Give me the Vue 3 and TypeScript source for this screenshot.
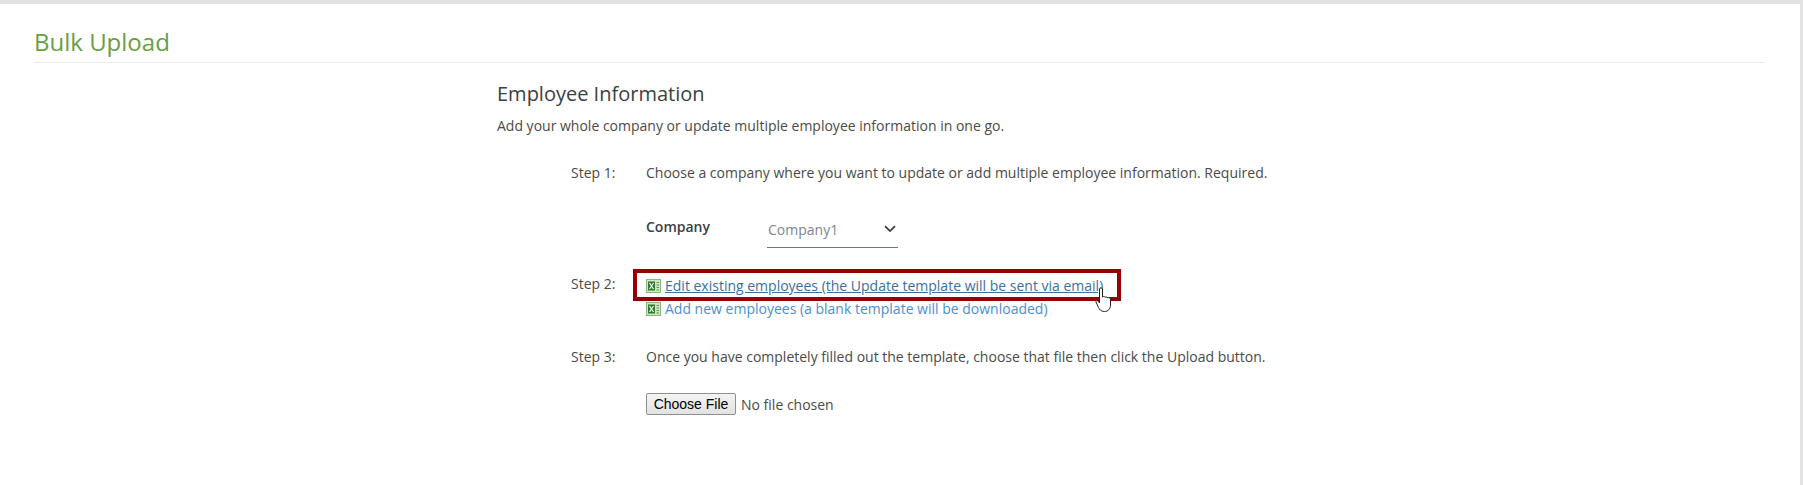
<script setup lang="ts">
const company = 'Company1';
</script>

<template>
  <div class="page">
    <main class="panel">
      <header class="head">
        <h1 class="title">Bulk Upload</h1>
      </header>

      <section class="content">
        <h2 class="section-title">Employee Information</h2>
        <p class="intro">Add your whole company or update multiple employee information in one go.</p>

        <div class="step step-one">
          <span class="step-label">Step 1:</span>
          <div class="step-body">
            <p class="line">Choose a company where you want to update or add multiple employee information. Required.</p>
            <div class="company-row">
              <span class="company-label">Company</span>
              <div class="select">
                <span>{{ company }}</span>
                <svg class="chevron" viewBox="0 0 12 8" width="12" height="8">
                  <path d="M1 1.2 L6 6 L11 1.2" fill="none" stroke="#343a40" stroke-width="1.7" />
                </svg>
              </div>
            </div>
          </div>
        </div>

        <div class="step step-two">
          <span class="step-label">Step 2:</span>
          <div class="step-body links">
            <a class="link active" href="#">
              <svg class="xls" viewBox="0 0 15 14" width="15" height="14">
                <rect x="0.5" y="0.5" width="14" height="13" fill="#d3e4c8" stroke="#8fb67e" />
                <rect x="2" y="2.5" width="7" height="9" fill="#2a7a2a" />
                <path d="M3.5 4 L7.5 10 M7.5 4 L3.5 10" stroke="#fff" stroke-width="1.2" />
                <path d="M10.5 3.5 H13 M10.5 6 H13 M10.5 8.5 H13 M10.5 11 H13" stroke="#4c9a4c" stroke-width="1.2" />
              </svg>
              <span class="link-text">Edit existing employees (the Update template will be sent via email)</span>
            </a>
            <a class="link" href="#">
              <svg class="xls" viewBox="0 0 15 14" width="15" height="14">
                <rect x="0.5" y="0.5" width="14" height="13" fill="#d3e4c8" stroke="#8fb67e" />
                <rect x="2" y="2.5" width="7" height="9" fill="#2a7a2a" />
                <path d="M3.5 4 L7.5 10 M7.5 4 L3.5 10" stroke="#fff" stroke-width="1.2" />
                <path d="M10.5 3.5 H13 M10.5 6 H13 M10.5 8.5 H13 M10.5 11 H13" stroke="#4c9a4c" stroke-width="1.2" />
              </svg>
              <span>Add new employees (a blank template will be downloaded)</span>
            </a>
            <div class="callout"></div>
            <svg class="cursor" viewBox="0 0 18 26" width="18" height="26">
              <path
                d="M4.5 2 C4.5 0.4 7.5 0.4 7.5 2 V10 C8.3 9.2 9.6 9.4 10 10.3 C11 9.6 12.3 9.9 12.7 10.8 C13.7 10.3 15.4 10.8 15.5 12.2 V18 C15.5 22 13 24.5 9.5 24.5 C6 24.5 4.5 22.5 3.5 20.5 L1 15 C0.6 13.8 2.2 13 3 14 L4.5 16 Z"
                fill="#fff"
                stroke="#222"
                stroke-width="1"
              />
            </svg>
          </div>
        </div>

        <div class="step step-three">
          <span class="step-label">Step 3:</span>
          <div class="step-body">
            <p class="line">Once you have completely filled out the template, choose that file then click the Upload button.</p>
            <div class="file-row">
              <button class="file-btn" type="button">Choose File</button>
              <span class="file-name">No file chosen</span>
            </div>
          </div>
        </div>
      </section>
    </main>
  </div>
</template>

<style>
html,
body {
  margin: 0;
  background: #fff;
}
</style>

<style scoped>
.page {
  box-sizing: border-box;
  width: 1803px;
  height: 485px;
  overflow: hidden;
  background: #e3e3e3;
  padding: 4px 3px 0 0;
  font-family: "Open Sans", sans-serif;
  font-size: 14px;
  color: #4a4a4a;
}

.panel {
  box-sizing: border-box;
  height: 100%;
  background: #fff;
  padding: 0 36px 0 34px;
}

.head {
  height: 58px;
  border-bottom: 1px solid #ebebeb;
  box-sizing: content-box;
}

.title {
  margin: 0;
  padding: 21px 0 0 0;
  font-size: 24px;
  line-height: 33px;
  font-weight: 400;
  color: #689e45;
}

.content {
  padding: 17px 0 0 463px;
}

.section-title {
  margin: 0;
  font-size: 20px;
  line-height: 27px;
  font-weight: 400;
  color: #3a3f44;
}

.intro {
  margin: 9px 0 0;
  line-height: 19px;
}

.line {
  margin: 0;
  line-height: 19px;
}

.step {
  display: flex;
  align-items: flex-start;
}

.step-label {
  width: 75px;
  margin-left: 74px;
  line-height: 19px;
}

.step-one {
  margin-top: 28px;
}

.company-row {
  display: flex;
  margin-top: 35px;
}

.company-label {
  width: 121px;
  font-weight: 600;
  color: #3a3f44;
  line-height: 19px;
}

.select {
  box-sizing: border-box;
  width: 131px;
  height: 31px;
  border-bottom: 1px solid #6c757d;
  display: flex;
  align-items: center;
  justify-content: space-between;
  padding: 0 2px 5px 1px;
  color: #7d868d;
}

.chevron {
  margin-top: -2px;
}

.step-two {
  margin-top: 26px;
}

.links {
  position: relative;
}

.link {
  display: flex;
  align-items: center;
  gap: 4px;
  height: 23px;
  color: #4a8fd1;
  text-decoration: none;
  white-space: nowrap;
}

.link.active {
  color: #3a6f9f;
}

.link-text {
  text-decoration: underline;
}

.xls {
  flex: none;
}

.callout {
  position: absolute;
  left: -13px;
  top: -5px;
  width: 488px;
  height: 32px;
  box-sizing: border-box;
  border: 4px solid #960000;
}

.cursor {
  position: absolute;
  left: 449px;
  top: 13px;
}

.step-three {
  margin-top: 27px;
}

.file-row {
  display: flex;
  align-items: center;
  gap: 5px;
  margin-top: 27px;
}

.file-btn {
  box-sizing: border-box;
  width: 90px;
  height: 22px;
  padding: 0;
  border: 1px solid #8f8f8f;
  border-radius: 2px;
  background: linear-gradient(#f4f4f4, #e2e2e2);
  font-family: "Liberation Sans", Arial, sans-serif;
  font-size: 14px;
  color: #000;
}
</style>
